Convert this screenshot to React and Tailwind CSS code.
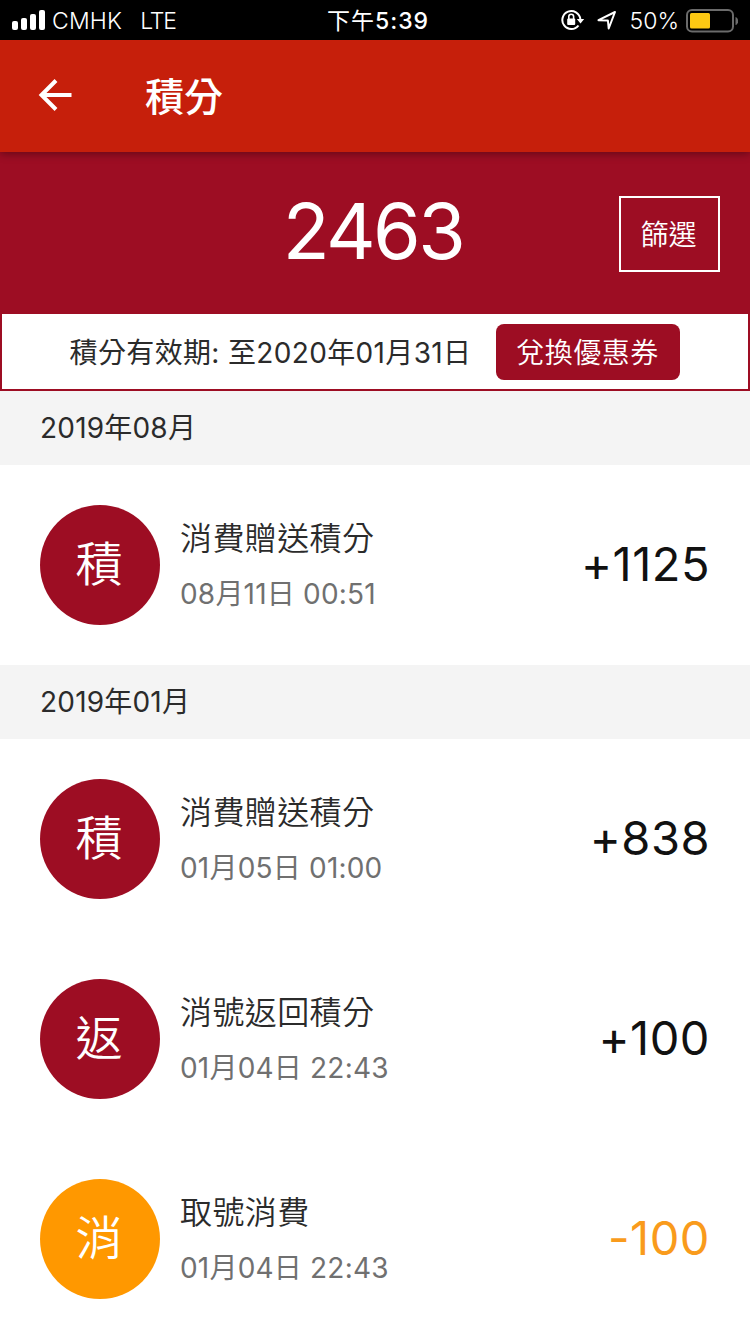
const sections = [
    {
        month: "2019年08月",
        records: [
            { id: 1, badge: "積", title: "消費贈送積分", time: "08月11日 00:51", points: 1125 },
        ],
    },
    {
        month: "2019年01月",
        records: [
            { id: 2, badge: "積", title: "消費贈送積分", time: "01月05日 01:00", points: 838 },
            { id: 3, badge: "返", title: "消號返回積分", time: "01月04日 22:43", points: 100 },
            { id: 4, badge: "消", title: "取號消費", time: "01月04日 22:43", points: -100 },
        ],
    },
];

function StatusBar() {
    return (
        <div className="grid h-10 grid-cols-3 items-center bg-black text-[23px] text-white">
            <div className="flex items-center pl-3">
                <svg width="34" height="20" viewBox="0 0 34 20" fill="currentColor">
                    <rect x="0" y="11" width="6" height="9" rx="2" />
                    <rect x="9" y="8" width="6" height="12" rx="2" />
                    <rect x="18" y="4" width="6" height="16" rx="2" />
                    <rect x="27" y="0" width="6" height="20" rx="2" />
                </svg>
                <span className="ml-[6px] pt-0.5 font-[350] tracking-[0.2px]">CMHK</span>
                <span className="ml-[18px] pt-0.5 font-[350] tracking-[-1.2px]">LTE</span>
            </div>
            <div className="pt-0.5 pl-1.5 text-center tracking-[1px]">
                下午<span className="font-medium">5:39</span>
            </div>
            <div className="flex items-center justify-end pr-3">
                {/* rotation lock */}
                <svg width="24" height="22" viewBox="0 0 24 22" fill="none" stroke="currentColor" strokeWidth="2">
                    <path d="M17.5 16.5A9 9 0 1 1 19.3 10" />
                    <path d="M15.8 10h7.4l-3.7 4.6z" fill="currentColor" stroke="none" />
                    <rect x="6.2" y="9.5" width="8" height="6.5" rx="1" fill="currentColor" stroke="none" />
                    <path d="M7.8 10V7.6a2.4 2.4 0 0 1 4.8 0V10" strokeWidth="1.6" />
                </svg>
                <svg className="ml-3" width="20" height="20" viewBox="0 0 20 20" fill="none" stroke="currentColor" strokeWidth="2" strokeLinejoin="round">
                    <path d="M1.5 10.2L18 2l-6.3 16.5-.8-8z" />
                </svg>
                <span className="ml-[13px] pt-0.5 font-[350]">50%</span>
                <svg className="mt-px ml-[7px]" width="52" height="24" viewBox="0 0 52 24">
                    <rect x="1" y="1" width="46" height="21.5" rx="5" fill="none" stroke="#6b6b6b" strokeWidth="2" />
                    <rect x="4" y="4" width="20" height="15.5" rx="1.5" fill="#fdc913" />
                    <path d="M49.5 8c3.5 1 3.5 7 0 8z" fill="#6b6b6b" />
                </svg>
            </div>
        </div>
    );
}

function RecordRow({ record }) {
    const spent = record.points < 0;

    return (
        <div className="flex h-[200px] items-center px-10">
            <div
                className={`flex size-[120px] items-center justify-center rounded-full text-[47px] leading-none font-[350] text-white ${
                    spent ? "bg-[#ff9800]" : "bg-[#9d0d23]"
                }`}
            >
                <span className="-ml-0.5 pb-[3px]">{record.badge}</span>
            </div>
            <div className="ml-5 flex-1 pt-1">
                <div className="text-[32px] leading-[54px] font-[350] tracking-[0.4px] text-[#2b2b2b]">{record.title}</div>
                <div className="text-[28px] leading-[56px] font-[370] tracking-[0.2px] text-[#707070]">{record.time}</div>
            </div>
            <div className={`pb-[3px] text-[47px] leading-none font-[370] tracking-[0.5px] ${spent ? "text-[#f99b1c]" : "text-[#111]"}`}>
                {spent ? record.points : `+${record.points}`}
            </div>
        </div>
    );
}

export default function App() {
    return (
        <div className="h-[1334px] w-[750px] overflow-hidden bg-white font-['Inter','Noto_Sans_CJK_TC',sans-serif]" lang="zh-Hant">
            <StatusBar />

            <header className="relative flex h-28 items-center bg-[#c61f0b] text-white shadow-[0_2px_8px_rgba(0,0,0,0.35)]">
                <svg className="-mt-0.5 ml-[38px]" width="34" height="32" viewBox="0 0 34 32" fill="none" stroke="currentColor" strokeWidth="4">
                    <path d="M33.5 16H4M18 1.5L3.5 16 18 30.5" />
                </svg>
                <h1 className="ml-[73px] text-[39px] leading-none font-medium">積分</h1>
            </header>

            {/* Balance */}
            <div className="grid h-[162px] grid-cols-[1fr_auto_1fr] items-center bg-[#9d0d23] text-white">
                <div className="col-start-2 pr-1 pb-[3px] text-[77px] leading-none font-[370] tracking-[-2.6px]">2463</div>
                <button className="mt-0.5 mr-[30px] h-[76px] w-[101px] justify-self-end border-2 border-white pt-0.5 pr-0.5 text-[28px] font-[350]">
                    篩選
                </button>
            </div>

            <div className="flex h-[77px] items-center justify-center border-2 border-t-0 border-[#9d0d23]">
                <span className="pt-0.5 text-[28px] font-[370] tracking-[0.35px] text-[#2b2b2b]">積分有效期: 至2020年01月31日</span>
                <button className="ml-[25px] h-14 w-[184px] rounded-lg bg-[#9d0d23] pt-0.5 pr-0.5 text-[28px] font-[350] tracking-[0.5px] text-white">
                    兌換優惠券
                </button>
            </div>

            {sections.map((section) => (
                <section key={section.month}>
                    <h2 className="h-[74px] bg-[#f4f4f4] pl-10 text-[28px] leading-[74px] font-[370] tracking-[0.2px] text-[#2b2b2b]">
                        {section.month}
                    </h2>
                    {section.records.map((record) => (
                        <RecordRow key={record.id} record={record} />
                    ))}
                </section>
            ))}
        </div>
    );
}
